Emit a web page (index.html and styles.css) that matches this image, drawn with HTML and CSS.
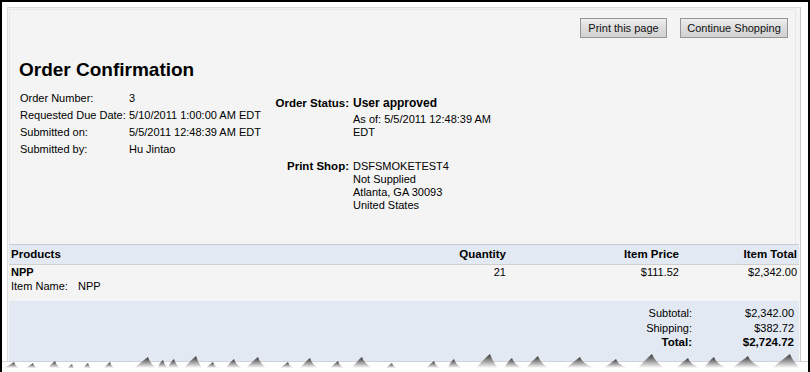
FILE: index.html
```html
<!DOCTYPE html>
<html lang="en">
<head>
    <meta charset="UTF-8">
    <meta name="viewport" content="width=device-width, initial-scale=1.0">
    <title>Order Confirmation</title>
    <link rel="stylesheet" href="styles.css">
</head>
<body>
    <div class="shot">
        <div class="panel">
            <div class="summary">
                <div class="actions">
                    <button class="btn btn-print">Print this page</button>
                    <button class="btn btn-shop">Continue Shopping</button>
                </div>
                <h1>Order Confirmation</h1>
                <div class="details">
                    <div class="info">
                        <span>Order Number:</span><span>3</span>
                        <span>Requested Due Date:</span><span>5/10/2011 1:00:00 AM EDT</span>
                        <span>Submitted on:</span><span>5/5/2011 12:48:39 AM EDT</span>
                        <span>Submitted by:</span><span>Hu Jintao</span>
                    </div>
                    <div class="status">
                        <div class="label first">Order Status:</div>
                        <div class="value first">User approved</div>
                        <div class="value asof">As of: 5/5/2011 12:48:39 AM EDT</div>
                        <div class="label shop">Print Shop:</div>
                        <div class="value shop">
                            DSFSMOKETEST4<br>
                            Not Supplied<br>
                            Atlanta, GA 30093<br>
                            United States
                        </div>
                    </div>
                </div>
            </div>
            <div class="products">
                <div class="row head">
                    <div>Products</div>
                    <div class="num">Quantity</div>
                    <div class="num">Item Price</div>
                    <div class="num">Item Total</div>
                </div>
                <div class="row item">
                    <div>
                        <b>NPP</b><br>
                        <span class="item-label">Item Name:</span>NPP
                    </div>
                    <div class="num">21</div>
                    <div class="num">$111.52</div>
                    <div class="num">$2,342.00</div>
                </div>
                <div class="totals">
                    <div class="t-label">Subtotal:</div><div class="t-value">$2,342.00</div>
                    <div class="t-label">Shipping:</div><div class="t-value">$382.72</div>
                    <div class="t-label grand">Total:</div><div class="t-value grand">$2,724.72</div>
                </div>
            </div>
        </div>

        <!-- torn paper edge -->
        <svg class="tear" width="810" height="24" viewBox="0 0 810 24">
            <defs>
                <linearGradient id="peak" x1="0" y1="0" x2="0" y2="1">
                    <stop offset="0" stop-color="#333333"/>
                    <stop offset="0.5" stop-color="#9a9a9a"/>
                    <stop offset="1" stop-color="#ffffff"/>
                </linearGradient>
            </defs>
            <rect x="0" y="14" width="810" height="10" fill="#ffffff"/>
            <line x1="0" y1="13.5" x2="810" y2="13.5" stroke="#cfd3d8" stroke-width="1"/>
            <g id="peaks" fill="url(#peak)"></g>
        </svg>
    </div>

    <script>
        // left, tip, right, tip height (page y)
        const peaks = [
            [4,14,22,360], [26,33,40,361], [48,55,62,359], [68,72,76,362], [84,88,93,361],
            [104,110,116,360], [134,148,156,355], [158,163,168,358], [168,174,180,357],
            [184,196,202,354], [206,213,220,360], [226,234,242,357], [246,258,266,355],
            [280,288,296,360], [300,310,318,356], [330,338,346,359], [352,362,372,355],
            [386,392,400,361], [426,434,442,359], [448,454,462,357], [476,490,498,352],
            [504,512,522,356], [526,538,548,354], [566,580,594,355], [604,616,628,357],
            [638,652,664,352], [676,688,700,356], [704,714,726,355], [732,748,762,354],
            [772,790,800,352]
        ];

        const group = document.getElementById("peaks");
        peaks.forEach(p => {
            const top = p[3] - 346;
            const path = document.createElementNS("http://www.w3.org/2000/svg", "path");
            path.setAttribute("d",
                `M${p[0]},20 Q${p[1] - 4},${top + 3} ${p[1]},${top} Q${p[1] + 2},${top + 6} ${p[2]},20 Z`);
            group.appendChild(path);
        });
    </script>
</body>
</html>
```

FILE: styles.css
```css
body {
    margin: 0;
    background: #fff;
    color: #000;
    font-family: "Liberation Sans", Arial, sans-serif;
    font-size: 11px;
}
.shot {
    position: relative;
    width: 810px;
    height: 372px;
    box-sizing: border-box;
    border: 2px solid #000;
    border-bottom: 0;
    overflow: hidden;
    background: #fff;
}
.panel {
    margin: 5px 7px 0 5px;
    height: 400px;
    padding: 1px;
    border: 1px solid #dcdcdc;
    border-right-color: #cbcbcb;
    background: #f4f4f4;
}
.summary {
    box-sizing: border-box;
    height: 235px;
    margin-right: 3px;
    padding: 8px 7px 0 9px;
    border: 1px solid #e8e8e8;
    border-bottom: 0;
}
.actions {
    display: flex;
    justify-content: flex-end;
    gap: 13px;
}
.btn {
    height: 20px;
    padding: 0;
    border: 1px solid #969696;
    background: linear-gradient(#eeeeee, #dcdcdc 50%, #d2d2d2);
    color: #111;
    font-family: "Liberation Sans", Arial, sans-serif;
    font-size: 11px;
}
.btn-print {
    width: 87px;
}
.btn-shop {
    width: 108px;
}
h1 {
    margin: 20px 0 9px;
    font-size: 19px;
    line-height: 23px;
}
.details {
    display: flex;
}
.info {
    width: 239px;
    margin-left: 1px;
    display: grid;
    grid-template-columns: 109px 1fr;
    grid-auto-rows: 17px;
    line-height: 17px;
    align-self: flex-start;
    white-space: nowrap;
}
.status {
    margin-top: 5px;
    display: grid;
    grid-template-columns: 90px 148px;
    column-gap: 4px;
    align-content: start;
}
.status .label {
    grid-column: 1;
    text-align: right;
    white-space: nowrap;
    font-weight: bold;
    font-size: 11.5px;
}
.status .value {
    grid-column: 2;
}
.status .first {
    font-weight: bold;
    font-size: 12px;
    line-height: 16px;
}
.status .label.first {
    font-size: 11.5px;
}
.status .asof {
    margin-top: 2px;
    line-height: 13px;
}
.status .shop {
    margin-top: 21px;
    line-height: 13px;
}
.products {
    border-top: 1px solid #c7ccd3;
}
.row {
    display: grid;
    grid-template-columns: 1fr 100px 173px 118px;
}
.row > div {
    padding: 0 2px 0 2px;
}
.row .num {
    text-align: right;
}
.head {
    height: 19px;
    line-height: 19px;
    background: #e3e9f2;
    border-bottom: 1px solid #d0d0d0;
    font-weight: bold;
    font-size: 11.5px;
}
.item {
    height: 36px;
    line-height: 14px;
    background: #f4f4f4;
}
.item-label {
    display: inline-block;
    width: 67px;
}
.totals {
    height: 80px;
    padding: 5px 5px 0 0;
    background: #e3e9f2;
    display: grid;
    grid-template-columns: 1fr 100px;
    grid-auto-rows: 14.5px;
    line-height: 14.5px;
}
.t-label {
    text-align: right;
    padding-right: 2px;
}
.t-value {
    text-align: right;
}
.grand {
    font-weight: bold;
    font-size: 11.5px;
}
.tear {
    position: absolute;
    left: -2px;
    top: 346px;
    display: block;
}
```
